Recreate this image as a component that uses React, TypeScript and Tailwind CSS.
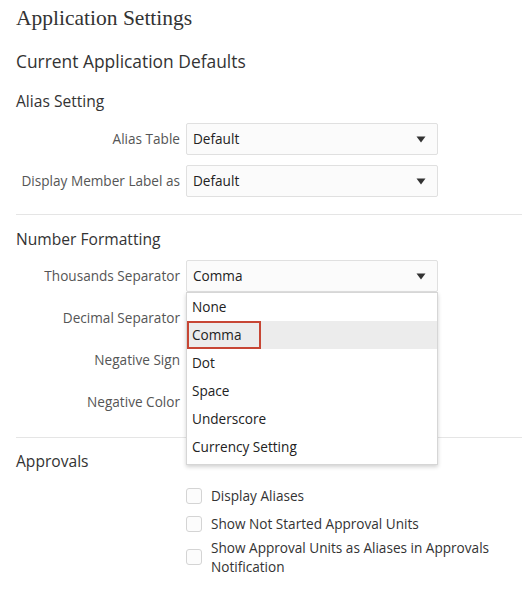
const ALIAS_ROWS = [
  { label: "Alias Table", value: "Default" },
  { label: "Display Member Label as", value: "Default" },
];

const OPTIONS = ["None", "Comma", "Dot", "Space", "Underscore", "Currency Setting"];

const APPROVALS = [
  "Display Aliases",
  "Show Not Started Approval Units",
  "Show Approval Units as Aliases in Approvals Notification",
];

export default function App() {
  return (
    <main className="h-[595px] w-[522px] overflow-hidden bg-white pl-4 font-['Open_Sans',sans-serif] text-[#333]">
      <h1 className="pt-[6px] font-['Liberation_Serif',serif] text-[21.5px] leading-[24px] text-[#333]">
        Application Settings
      </h1>

      <h2 className="mt-[19px] text-[17.4px] leading-[24px]">Current Application Defaults</h2>

      <h3 className="mt-[17px] text-[15.6px] leading-[22px]">Alias Setting</h3>

      <div className="mt-[11px] flex flex-col gap-[10px]">
        {ALIAS_ROWS.map((row) => (
          <FormRow key={row.label} label={row.label}>
            <Select value={row.value} />
          </FormRow>
        ))}
      </div>

      <hr className="mt-[17px] border-t border-[#e5e5e5]" />

      <h3 className="mt-[13px] text-[15.6px] leading-[22px]">Number Formatting</h3>

      <div className="mt-[10px] flex flex-col gap-[10px]">
        <FormRow label="Thousands Separator">
          <div className="relative">
            <Select value="Comma" />
            <Menu />
          </div>
        </FormRow>
        <FormRow label="Decimal Separator">
          <div className="h-8" />
        </FormRow>
        <FormRow label="Negative Sign">
          <div className="h-8" />
        </FormRow>
        <FormRow label="Negative Color">
          <div className="h-8" />
        </FormRow>
      </div>

      <hr className="mt-[19px] border-t border-[#e5e5e5]" />

      <h3 className="mt-[12px] text-[15.6px] leading-[22px]">Approvals</h3>

      <div className="mt-[14px] flex flex-col pl-[170px]">
        {APPROVALS.map((text, i) => (
          <label
            key={text}
            className={[
              "flex items-center gap-[9px] text-[13.6px] leading-[19px] text-[#333]",
              i === 1 ? "mt-[9px]" : "",
              i === 2 ? "mt-[5px]" : "",
            ].join(" ")}
          >
            <span className="size-4 shrink-0 rounded-[3px] border border-[#d4d4d4] bg-[#fcfcfc]" />
            <span className="w-[295px]">{text}</span>
          </label>
        ))}
      </div>
    </main>
  );
}

interface FormRowProps {
  label: string;
  children: React.ReactNode;
}

function FormRow({ label, children }: FormRowProps) {
  return (
    <div className="grid grid-cols-[164px_252px] items-center gap-[6px]">
      <span className="whitespace-nowrap text-right text-[13.6px] text-[#555]">{label}</span>
      {children}
    </div>
  );
}

function Select({ value }: { value: string }) {
  return (
    <div className="flex h-8 items-center justify-between rounded-[2px] border border-[#e0e0e0] bg-[#fbfbfb] pl-[6px] pr-[11px] text-[13.6px] text-[#222]">
      <span>{value}</span>
      <svg width="10" height="7" viewBox="0 0 10 7" className="text-[#333]">
        <path d="M0.5 0.5 H9.5 L5 6.5 Z" fill="currentColor" />
      </svg>
    </div>
  );
}

function Menu() {
  return (
    <ul className="absolute left-0 top-full z-10 w-full border border-[#d6d6d6] bg-white pb-[3px] shadow-[0_2px_4px_rgba(0,0,0,0.18)]">
      {OPTIONS.map((opt) => (
        <li
          key={opt}
          className={[
            "relative flex h-7 items-center px-[5px] text-[13.6px] text-[#222]",
            opt === "Comma" ? "bg-[#ececec]" : "",
          ].join(" ")}
        >
          {opt}
          {opt === "Comma" && (
            <span className="absolute left-0 top-0 h-7 w-[74px] border-2 border-[#c74634]" />
          )}
        </li>
      ))}
    </ul>
  );
}
